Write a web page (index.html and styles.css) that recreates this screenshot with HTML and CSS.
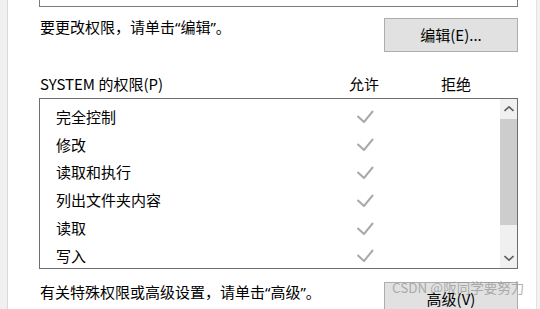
FILE: index.html
```html
<!DOCTYPE html>
<html lang="zh-CN">
<head>
<meta charset="utf-8">
<title>SYSTEM 的权限</title>
<link rel="stylesheet" href="styles.css">
</head>
<body>
<div class="page">
  <div class="strip-left"></div>
  <div class="content">
    <div class="top-box"></div>
    <div class="action-row first">
      <span class="hint">要更改权限，请单击<span class="q">“</span>编辑<span class="q">”</span>。</span>
      <button class="btn">编辑(E)...</button>
    </div>
    <div class="perm-header">
      <span>SYSTEM 的权限(P)</span>
      <span>允许</span>
      <span>拒绝</span>
    </div>
    <div class="list-box">
      <div class="rows">
        <div class="row"><span>完全控制</span><svg class="check" viewBox="0 0 17 13" width="17" height="13"><path d="M0.5 6 L7 12 L16 1"/></svg></div>
        <div class="row"><span>修改</span><svg class="check" viewBox="0 0 17 13" width="17" height="13"><path d="M0.5 6 L7 12 L16 1"/></svg></div>
        <div class="row"><span>读取和执行</span><svg class="check" viewBox="0 0 17 13" width="17" height="13"><path d="M0.5 6 L7 12 L16 1"/></svg></div>
        <div class="row"><span>列出文件夹内容</span><svg class="check" viewBox="0 0 17 13" width="17" height="13"><path d="M0.5 6 L7 12 L16 1"/></svg></div>
        <div class="row"><span>读取</span><svg class="check" viewBox="0 0 17 13" width="17" height="13"><path d="M0.5 6 L7 12 L16 1"/></svg></div>
        <div class="row"><span>写入</span><svg class="check" viewBox="0 0 17 13" width="17" height="13"><path d="M0.5 6 L7 12 L16 1"/></svg></div>
      </div>
      <div class="scrollbar">
        <div class="arrow"><svg viewBox="0 0 10 6" width="10" height="6"><path d="M0.5 5 L5 0.8 L9.5 5"/></svg></div>
        <div class="thumb"></div>
        <div class="track"></div>
        <div class="arrow"><svg viewBox="0 0 10 6" width="10" height="6"><path d="M0.5 1 L5 5.2 L9.5 1"/></svg></div>
      </div>
    </div>
    <div class="action-row last">
      <span class="hint">有关特殊权限或高级设置，请单击<span class="q">“</span>高级<span class="q">”</span>。</span>
      <button class="btn"><span class="btn-label">高级(V)</span></button>
      <span class="watermark">CSDN @阪同学要努力</span>
    </div>
  </div>
  <div class="strip-right"></div>
</div>
</body>
</html>
```
FILE: styles.css
```css
html, body {
  margin: 0;
  padding: 0;
  background: #ffffff;
}
body {
  font-family: "Noto Sans CJK SC", "Microsoft YaHei", sans-serif;
  font-size: 15px;
  line-height: 20px;
  color: #000;
  overflow: hidden;
}
.page {
  display: flex;
  width: 540px;
  height: 309px;
  overflow: hidden;
}
.strip-left {
  width: 7px;
  background: #f0f0f0;
  border-right: 1px solid #d9d9d9;
  flex: none;
}
.strip-right {
  width: 3px;
  background: #f2f2f2;
  border-left: 1px solid #e2e2e2;
  flex: none;
}
.content {
  flex: 1;
  padding: 0 18px 0 31px;
  display: flex;
  flex-direction: column;
  min-width: 0;
}
.top-box {
  height: 6px;
  border: 1px solid #7a7a7a;
  border-top: none;
  flex: none;
}
.q {
  font-family: "Noto Sans", "Liberation Sans", sans-serif;
}
.action-row {
  display: flex;
  justify-content: space-between;
  align-items: flex-start;
  flex: none;
  position: relative;
}
.action-row.first .hint { margin-top: 10px; padding-left: 1px; }
.action-row.first .btn { margin-top: 11px; }
.action-row.last .hint { margin-top: 13px; padding-left: 1px; }
.action-row.last .btn { margin-top: 13px; }
.btn {
  width: 134px;
  height: 34px;
  background: #e1e1e1;
  border: 1px solid #adadad;
  font: inherit;
  color: #000;
  padding: 0;
  margin: 0;
  flex: none;
}
.btn-label {
  position: relative;
  z-index: 2;
}
.perm-header {
  display: grid;
  grid-template-columns: 309px 92px 1fr;
  margin-top: 22px;
  padding-left: 1px;
  flex: none;
}
.list-box {
  margin-top: 4px;
  height: 169px;
  border: 1px solid #6e6e6e;
  display: flex;
  overflow: hidden;
  flex: none;
}
.rows {
  flex: 1;
  padding: 4px 0 0 16px;
}
.row {
  height: 27.8px;
  display: grid;
  grid-template-columns: 301px 17px;
  align-items: center;
}
.check {
  display: block;
  fill: none;
  stroke: #a9a9a9;
  stroke-width: 2;
}
.scrollbar {
  width: 17px;
  background: #f0f0f0;
  display: flex;
  flex-direction: column;
  flex: none;
}
.arrow {
  height: 20px;
  display: flex;
  align-items: center;
  justify-content: center;
  flex: none;
}
.arrow svg {
  display: block;
  fill: none;
  stroke: #606060;
  stroke-width: 1.6;
}
.thumb {
  height: 106px;
  background: #cdcdcd;
  flex: none;
}
.track {
  flex: 1;
}
.watermark {
  position: absolute;
  left: 353px;
  top: 8px;
  font-size: 13.5px;
  color: rgba(150, 150, 150, 0.75);
  white-space: nowrap;
  z-index: 1;
  pointer-events: none;
}
```
